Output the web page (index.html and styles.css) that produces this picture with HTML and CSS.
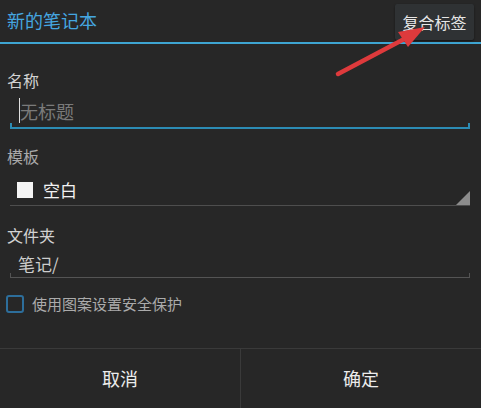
FILE: index.html
```html
<!DOCTYPE html>
<html lang="zh-CN">
  <head>
    <meta charset="UTF-8" />
    <meta name="viewport" content="width=device-width, initial-scale=1.0" />
    <title>新的笔记本</title>
    <link rel="stylesheet" href="styles.css">
  </head>
  <body>
    <div class="dialog">
      <div class="titlebar">
        <h1>新的笔记本</h1>
        <button class="tag-btn" type="button">复合标签</button>
      </div>

      <div class="content">
        <div class="label label-name">名称</div>
        <div class="field">
          <span class="cursor"></span><span class="placeholder">无标题</span>
        </div>
        <div class="underline active"></div>

        <div class="label label-dim">模板</div>
        <div class="spinner">
          <span class="swatch"></span>
          <span class="spinner-text">空白</span>
          <span class="corner"></span>
        </div>

        <div class="label label-folder">文件夹</div>
        <div class="field folder">笔记/</div>
        <div class="underline"></div>

        <label class="check-row">
          <span class="checkbox"></span>
          <span>使用图案设置安全保护</span>
        </label>
      </div>

      <div class="actions">
        <button type="button">取消</button>
        <button type="button">确定</button>
      </div>

      <!-- annotation arrow drawn over the dialog -->
      <svg class="arrow" width="481" height="120" viewBox="0 0 481 120">
        <line x1="338" y1="74" x2="408" y2="37" stroke="#de3a3c" stroke-width="4.5" stroke-linecap="round" />
        <polygon points="425,27 398,32 408,47" fill="#de3a3c" />
      </svg>
    </div>
  </body>
</html>
```

FILE: styles.css
```css
body {
  margin: 0;
  padding: 0;
  background-color: #272727;
  font-family: "Noto Sans CJK SC", "Noto Sans", sans-serif;
}
.dialog {
  position: relative;
  height: 408px;
  display: flex;
  flex-direction: column;
  background-color: #272727;
}
.titlebar {
  height: 42px;
  border-bottom: 2px solid #3ea5d2;
  display: flex;
  justify-content: space-between;
  align-items: flex-start;
}
.titlebar h1 {
  margin: 0;
  padding-left: 7px;
  font-size: 18px;
  font-weight: normal;
  line-height: 40px;
  color: #45a6e0;
}
.tag-btn {
  margin: 4px 7px 0 0;
  height: 36px;
  width: 79px;
  padding: 0;
  border: none;
  border-radius: 2px;
  background-color: #2f3234;
  box-shadow: 0 1px 2px rgba(0, 0, 0, 0.5);
  color: #e6e6e6;
  font-family: inherit;
  font-size: 16px;
}
.content {
  padding-top: 26px;
}
.label {
  padding-left: 7px;
  font-size: 16px;
  line-height: 20px;
  color: #d2d2d2;
}
.label-dim {
  margin-top: 17px;
  color: #a9a9a9;
}
.label-folder {
  margin-top: 19px;
}
.field {
  margin: 0 11px 0 10px;
  padding: 8px 0 0 10px;
  height: 25px;
  display: flex;
  align-items: center;
  font-size: 18px;
}
.cursor {
  width: 1px;
  height: 25px;
  background-color: #e0e0e0;
  margin-left: -1px;
}
.placeholder {
  color: #7a7a7a;
}
.underline {
  margin: 0 11px 0 10px;
  height: 4px;
  border: solid #545454;
  border-width: 0 1px 1px;
}
.underline.active {
  border-color: #2c8cb4;
  border-width: 0 2px 2px;
}
.spinner {
  position: relative;
  margin: 0 11px 0 10px;
  padding: 11px 0 4px 7px;
  height: 24px;
  border-bottom: 1px solid #4e4e4e;
  display: flex;
  align-items: center;
  gap: 10px;
}
.swatch {
  width: 16px;
  height: 16px;
  background-color: #f4f4f4;
  margin-top: 2px;
}
.spinner-text {
  font-size: 17px;
  color: #f2f2f2;
}
.corner {
  position: absolute;
  right: 0;
  bottom: 0;
  width: 0;
  height: 0;
  border-left: 14px solid transparent;
  border-bottom: 14px solid #8c8c8c;
}
.folder {
  padding: 8px 0 0 8px;
  height: 20px;
  font-size: 17px;
  color: #cdcdcd;
}
.check-row {
  margin-top: 17px;
  padding-left: 6px;
  display: flex;
  align-items: center;
  gap: 8px;
  font-size: 15px;
  line-height: 18px;
  color: #ababab;
}
.checkbox {
  width: 14px;
  height: 14px;
  border: 2px solid #2d6e9b;
  border-radius: 3px;
}
.actions {
  margin-top: auto;
  height: 59px;
  border-top: 1px solid #3a3a3a;
  display: flex;
}
.actions button {
  flex: 1;
  border: none;
  background: none;
  color: #ececec;
  font-family: inherit;
  font-size: 18px;
  padding: 0 0 2px 0;
}
.actions button + button {
  border-left: 1px solid #3a3a3a;
}
.arrow {
  position: absolute;
  left: 0;
  top: 0;
}
```
